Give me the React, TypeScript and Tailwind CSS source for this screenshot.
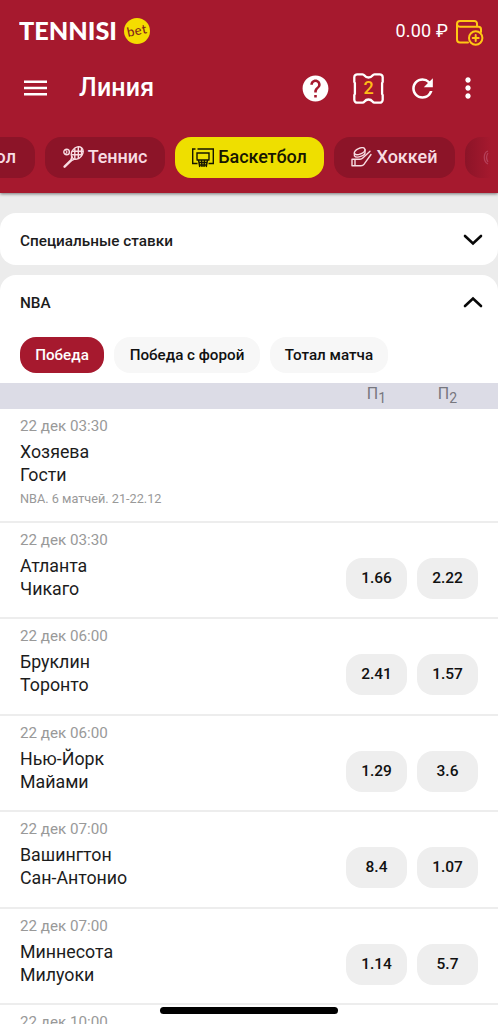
import { MdHelp, MdMoreVert, MdRefresh } from 'react-icons/md';

interface Match {
  time: string;
  home: string;
  away: string;
  note?: string;
  odds?: string[];
}

const matches: Match[] = [
  { time: '22 дек 03:30', home: 'Хозяева', away: 'Гости', note: 'NBA. 6 матчей. 21-22.12' },
  { time: '22 дек 03:30', home: 'Атланта', away: 'Чикаго', odds: ['1.66', '2.22'] },
  { time: '22 дек 06:00', home: 'Бруклин', away: 'Торонто', odds: ['2.41', '1.57'] },
  { time: '22 дек 06:00', home: 'Нью-Йорк', away: 'Майами', odds: ['1.29', '3.6'] },
  { time: '22 дек 07:00', home: 'Вашингтон', away: 'Сан-Антонио', odds: ['8.4', '1.07'] },
  { time: '22 дек 07:00', home: 'Миннесота', away: 'Милуоки', odds: ['1.14', '5.7'] },
  { time: '22 дек 10:00', home: '', away: '' },
];

function MenuIcon() {
  return (
    <svg width="23" height="16" viewBox="0 0 23 16" stroke="white" strokeWidth="2.4">
      <path d="M0 1.700h23M0 8h23M0 14.300h23" />
    </svg>
  );
}

function WalletIcon() {
  return (
    <svg className="mt-[3px]" width="28" height="26" viewBox="0 0 28 26" fill="none" stroke="#ffc814" strokeWidth="2" strokeLinejoin="round" strokeLinecap="round">
      <path d="M12 22.500H4A3 3 0 0 1 1 19.500V4a3 3 0 0 1 3-3h14.500A2.500 2.500 0 0 1 21 3.500V6" />
      <path d="M1.200 4.800A3 3 0 0 0 4 6.800h18.500A2.500 2.500 0 0 1 25 9.300V12" />
      <circle cx="19.700" cy="18" r="6.700" />
      <path d="M19.700 15v6M16.700 18h6" />
    </svg>
  );
}

function TicketIcon() {
  return (
    <svg className="col-start-1 row-start-1" width="31" height="31" viewBox="0 0 31 31" fill="none" stroke="white" strokeWidth="2.3" strokeLinejoin="round">
      <path d="M4.300 1.300H9.500c1 0 1.400.400 2 1.200a5 5 0 0 0 8 0c.600-.800 1-1.200 2-1.200h5.200a3 3 0 0 1 3 3v4.700l-.600 1v11l.600 1v4.700a3 3 0 0 1-3 3h-5.200c-1 0-1.400-.400-2-1.200a5 5 0 0 0-8 0c-.600.800-1 1.200-2 1.200H4.300a3 3 0 0 1-3-3V22l.600-1V10l-.600-1V4.300a3 3 0 0 1 3-3z" />
    </svg>
  );
}

function TennisIcon() {
  return (
    <svg width="21" height="22" viewBox="0 0 21 22" fill="none" stroke="currentColor" strokeWidth="1.4" strokeLinecap="round">
      <ellipse cx="14.200" cy="7" rx="6.800" ry="5.300" transform="rotate(-50 14.200 7)" />
      <path d="M11.800 2.800v9.300M15.300 1.300v11.200M18.500 2v7.500M9 5.200h10.700M8.600 8.800h10.300" />
      <path d="M9 10.500L7.500 15M12 12.800L7.500 15" />
      <path d="M7.500 14.800L1.600 20.700" strokeWidth="2.4" />
      <circle cx="3.600" cy="6" r="2.800" />
      <path d="M2.800 4.500c1.500.800 1.500 2.200 0 3" strokeWidth="1.1" />
    </svg>
  );
}

function BasketballIcon() {
  return (
    <svg width="22" height="20" viewBox="0 0 22 20" fill="none" stroke="currentColor" strokeWidth="1.4">
      <path d="M5.500 15.500H.700V1h2.800M5.500 1h15.800v14.500h-4.800" />
      <path d="M5 11.500V5h12v6.500M4.500 12h13" />
      <path d="M6.500 12l1.300 7M15.500 12l-1.300 7M9.500 12l.500 7M12.500 12l-.500 7M7 14.500h8M7.500 17h7" />
    </svg>
  );
}

function HockeyIcon() {
  return (
    <svg width="21" height="20" viewBox="0 0 21 20" fill="none" stroke="currentColor" strokeWidth="1.4" strokeLinejoin="round" strokeLinecap="round">
      <path d="M1 12.200h8c1.200 0 2-.400 2.800-1.200L19 4.200M1 12.200v6.500h9c1.400 0 2.300-.500 3.100-1.500L20 7.500M4 12.200v6.500" />
      <ellipse cx="8.600" cy="4.200" rx="5.600" ry="2.800" transform="rotate(-23 8.600 4.200)" />
      <path d="M3.400 6.500v2.300c1 1.600 4 1.500 7 .300 2.600-1 4-2.600 3.600-4.300V2.800" />
    </svg>
  );
}

function Chevron({ up = false }: { up?: boolean }) {
  return (
    <svg className={up ? 'mt-[2px] rotate-180' : 'mt-[2px]'} width="20" height="12" viewBox="0 0 20 12" fill="none" stroke="#080808" strokeWidth="2.6" strokeLinecap="round">
      <path d="M2 2L10 9.500L18 2" />
    </svg>
  );
}

function Header() {
  return (
    <header className="relative z-10 h-[193px] shrink-0 overflow-hidden bg-[#a6192e] text-white shadow-[0_1px_3px_rgba(0,0,0,0.5)]">
      <div className="flex h-[62px] items-center justify-between pr-[14px] pl-[19px]">
        <div className="flex items-center gap-[5px]">
          <svg width="100" height="32" role="img" aria-label="TENNISI">
            <text x="0" y="25" textLength="98" lengthAdjust="spacingAndGlyphs" fill="white" fontFamily="Lato, sans-serif" fontWeight="900" fontSize="24.500">
              TENNISI
            </text>
          </svg>
          <span className="flex size-[26px] items-center justify-center rounded-full bg-[#f5dc00]">
            <span className="-rotate-12 pb-[2px] font-[Lato] text-[13px] leading-none font-medium tracking-[0.5px] text-[#82251c]">bet</span>
          </span>
        </div>
        <div className="flex items-center gap-[8px]">
          <span className="pb-px text-[18px] tracking-[0.15px]">0.00 ₽</span>
          <WalletIcon />
        </div>
      </div>

      <div className="flex h-[52px] items-center pl-[24px]">
        <MenuIcon />
        <h1 className="ml-[32px] text-[25px] font-medium tracking-[0.2px]">Линия</h1>
        <div className="ml-auto flex items-center pr-[14px]">
          <MdHelp size={31} />
          <div className="ml-[22px] grid place-items-center">
            <TicketIcon />
            <span className="col-start-1 row-start-1 pb-[2px] text-[18px] font-medium text-[#ffbd18]">2</span>
          </div>
          <MdRefresh className="ml-[23px]" size={31} />
          <MdMoreVert className="ml-[14px]" size={32} />
        </div>
      </div>

      <nav className="mt-[23px] flex gap-[10px] text-[18px] leading-[39px] font-medium whitespace-nowrap text-[#f8dce2]">
        <div className="-ml-[86px] flex h-[41px] w-[121px] shrink-0 justify-end rounded-[16px] bg-[#8c1428] pr-[19px]">
          Футбол
        </div>
        <div className="flex h-[41px] w-[120px] shrink-0 justify-center gap-[4px] rounded-[16px] bg-[#8c1428]">
          <span className="pt-[9px]">
            <TennisIcon />
          </span>
          <span className="tracking-[-0.05px]">Теннис</span>
        </div>
        <div className="flex h-[41px] w-[149px] shrink-0 justify-center gap-[4px] rounded-[16px] bg-[#eedf00] text-[#161600]">
          <span className="pt-[11px]">
            <BasketballIcon />
          </span>
          <span className="tracking-[-0.1px]">Баскетбол</span>
        </div>
        <div className="flex h-[41px] w-[121px] shrink-0 justify-center gap-[4px] rounded-[16px] bg-[#8c1428]">
          <span className="pt-[10px]">
            <HockeyIcon />
          </span>
          <span>Хоккей</span>
        </div>
        <div className="flex h-[41px] w-[33px] shrink-0 items-center rounded-l-[16px] bg-linear-to-r from-[#8c1428] to-[#a6192e] to-80% pl-[18px]">
          <svg width="15" height="20" viewBox="0 0 15 20" fill="none" stroke="#b5415a" strokeWidth="1.2">
            <path d="M5 3C0 5 0 13 5 16M5 5c-2 3-2 6 0 9" />
          </svg>
        </div>
      </nav>
    </header>
  );
}

function MatchRow({ match }: { match: Match }) {
  return (
    <div
      className={`flex shrink-0 justify-between border-b-2 border-[#ededed] px-[20px] ${
        match.note ? 'h-[113.5px]' : 'h-[96.5px]'
      }`}
    >
      <div className="pt-[7px]">
        <div className="text-[15.2px] leading-[20px] text-[#999]">{match.time}</div>
        <div className="mt-[4px] text-[17.8px] leading-[23px] text-[#1c1c1c]">
          <div>{match.home}</div>
          <div>{match.away}</div>
        </div>
        {match.note && <div className="mt-[4.5px] text-[12.7px] leading-[16px] text-[#999]">{match.note}</div>}
      </div>
      {match.odds && (
        <div className="flex gap-[10px] pt-[35px]">
          {match.odds.map((odd) => (
            <button key={odd} className="h-[41px] w-[61px] rounded-[16px] bg-[#eee] pt-px text-[15.5px] font-medium text-[#111]">
              {odd}
            </button>
          ))}
        </div>
      )}
    </div>
  );
}

export default function App() {
  return (
    <div className="relative flex h-[1024px] w-[498px] flex-col overflow-hidden bg-[#ececec] font-[Roboto,sans-serif] text-[#1c1c1c]">
      <Header />

      <section className="mt-[20px] flex h-[52px] shrink-0 items-center justify-between rounded-[16px] bg-white pr-[15px] pl-[20px]">
        <h2 className="pt-[4px] text-[15.3px] font-medium">Специальные ставки</h2>
        <Chevron />
      </section>

      <section className="mt-[10px] flex flex-1 flex-col rounded-t-[16px] bg-white">
        <div className="flex h-[52px] shrink-0 items-center justify-between pr-[15px] pl-[20px]">
          <h2 className="pt-[5px] text-[15.3px] font-medium">NBA</h2>
          <Chevron up />
        </div>

        <div className="mt-[10px] flex h-[36px] shrink-0 gap-[10px] pl-[20px] text-[15.2px] font-medium text-[#111]">
          <button className="w-[84px] rounded-[16px] bg-[#a6192e] pt-px text-white">Победа</button>
          <button className="w-[146px] rounded-[16px] bg-[#f7f7f7] pt-px">Победа с форой</button>
          <button className="w-[118px] rounded-[16px] bg-[#f7f7f7] pt-px">Тотал матча</button>
        </div>

        <div className="mt-[10px] flex h-[26px] shrink-0 justify-end gap-[10px] bg-[#dcdce6] pr-[20px] text-[16px] leading-[22px] text-[#77777e]">
          <span className="w-[61px] text-center">
            П<sub className="bottom-[-0.25em] text-[14px]">1</sub>
          </span>
          <span className="w-[61px] text-center">
            П<sub className="bottom-[-0.25em] text-[14px]">2</sub>
          </span>
        </div>

        {matches.map((match, i) => (
          <MatchRow key={i} match={match} />
        ))}
      </section>

      {/* Home indicator */}
      <div className="absolute bottom-[10px] left-[160px] h-[7px] w-[178px] rounded-full bg-black" />
    </div>
  );
}
